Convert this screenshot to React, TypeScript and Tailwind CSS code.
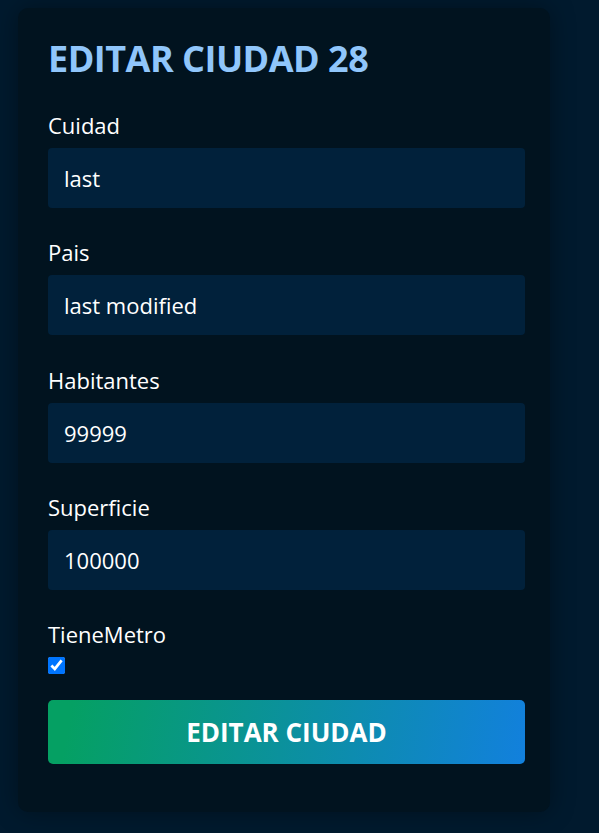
import { useState } from 'react';

const fields = [
  { label: 'Cuidad', value: 'last', gap: 'mt-[29px]' },
  { label: 'Pais', value: 'last modified', gap: 'mt-[29px]' },
  { label: 'Habitantes', value: '99999', gap: 'mt-[30px]' },
  { label: 'Superficie', value: '100000', gap: 'mt-[29px]' },
];

export default function App() {
  const [values, setValues] = useState(fields.map(f => f.value));
  const [metro, setMetro] = useState(true);

  return (
    <div className="min-h-[833px] w-[599px] bg-[#011a2e] pt-2 pl-[18px] font-['Open_Sans',sans-serif]">
      <form
        onSubmit={e => e.preventDefault()}
        className="w-[532px] rounded-[10px] bg-[#01131f] pl-[30px] pr-[25px] pt-[29px] pb-[48px] shadow-[0_0_24px_rgba(0,0,0,0.35)]"
      >
        <h1 className="text-[36px] leading-[44px] font-bold tracking-[-0.5px] text-[#90c6fb]">EDITAR CIUDAD 28</h1>
        {fields.map((f, i) => (
          <div key={f.label} className={f.gap}>
            <label className="block text-[22px] leading-[30px] text-white">{f.label}</label>
            <input
              type="text"
              value={values[i]}
              onChange={e => setValues(v => v.map((x, j) => (j === i ? e.target.value : x)))}
              className="mt-2 h-[60px] w-full rounded-[4px] bg-[#01213b] px-4 text-[22px] text-white outline-none"
            />
          </div>
        ))}
        <div className="mt-[29px]">
          <label className="block text-[22px] leading-[30px] text-white">TieneMetro</label>
          <input
            type="checkbox"
            checked={metro}
            onChange={e => setMetro(e.target.checked)}
            className="mt-2 block h-[17px] w-[17px]"
          />
        </div>
        <button
          type="submit"
          className="mt-[26px] h-[64px] w-full rounded-[5px] bg-[linear-gradient(100deg,#05a063_5%,#1280dd_100%)] text-[26px] font-bold text-white"
        >
          EDITAR CIUDAD
        </button>
      </form>
    </div>
  );
}
